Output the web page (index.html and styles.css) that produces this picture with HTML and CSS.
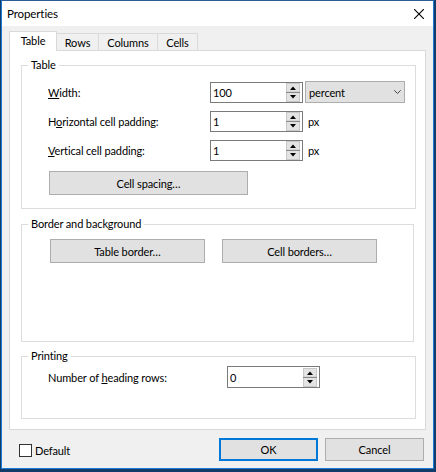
FILE: index.html
```html
<!DOCTYPE html>
<html lang="en">
<head>
<meta charset="utf-8">
<title>Properties</title>
<link rel="stylesheet" href="styles.css">
</head>
<body>
<div class="window">
  <div class="titlebar">
    <span class="title">Properties</span>
    <svg class="close" width="10" height="10" viewBox="0 0 10 10" aria-label="Close">
      <path d="M0 0 L10 10 M10 0 L0 10" stroke="#000" stroke-width="1.1" fill="none"/>
    </svg>
  </div>

  <div class="dialog">
    <div class="tabs">
      <div class="tab active">Table</div>
      <div class="tab tab-rows">Rows</div>
      <div class="tab tab-cols">Columns</div>
      <div class="tab tab-cells">Cells</div>
    </div>

    <div class="panel">
      <div class="group group-table">
        <span class="legend">Table</span>
        <div class="row">
          <label class="lbl"><u>W</u>idth:</label>
          <div class="spin">
            <span class="val">100</span>
            <svg class="spinner" width="14" height="19" viewBox="0 0 14 19">
              <rect x="0.5" y="0.5" width="13" height="8.5" fill="#e3e3e3" stroke="#c8c8c8"/>
              <rect x="0.5" y="9.5" width="13" height="9" fill="#e3e3e3" stroke="#c8c8c8"/>
              <line x1="0" y1="9.5" x2="14" y2="9.5" stroke="#8a8a8a"/>
              <path d="M4 7 L10 7 L7 3.5 Z" fill="#000"/>
              <path d="M4 12 L10 12 L7 15.5 Z" fill="#000"/>
            </svg>
          </div>
          <div class="combo">
            <span>percent</span>
            <svg width="7" height="4" viewBox="0 0 7 4"><path d="M0.3 0.3 L3.5 3.5 L6.7 0.3" stroke="#444" stroke-width="1" fill="none"/></svg>
          </div>
        </div>
        <div class="row">
          <label class="lbl">H<u>o</u>rizontal cell padding:</label>
          <div class="spin">
            <span class="val">1</span>
            <svg class="spinner" width="14" height="19" viewBox="0 0 14 19">
              <rect x="0.5" y="0.5" width="13" height="8.5" fill="#e3e3e3" stroke="#c8c8c8"/>
              <rect x="0.5" y="9.5" width="13" height="9" fill="#e3e3e3" stroke="#c8c8c8"/>
              <line x1="0" y1="9.5" x2="14" y2="9.5" stroke="#8a8a8a"/>
              <path d="M4 7 L10 7 L7 3.5 Z" fill="#000"/>
              <path d="M4 12 L10 12 L7 15.5 Z" fill="#000"/>
            </svg>
          </div>
          <span class="unit">px</span>
        </div>
        <div class="row">
          <label class="lbl"><u>V</u>ertical cell padding:</label>
          <div class="spin">
            <span class="val">1</span>
            <svg class="spinner" width="14" height="19" viewBox="0 0 14 19">
              <rect x="0.5" y="0.5" width="13" height="8.5" fill="#e3e3e3" stroke="#c8c8c8"/>
              <rect x="0.5" y="9.5" width="13" height="9" fill="#e3e3e3" stroke="#c8c8c8"/>
              <line x1="0" y1="9.5" x2="14" y2="9.5" stroke="#8a8a8a"/>
              <path d="M4 7 L10 7 L7 3.5 Z" fill="#000"/>
              <path d="M4 12 L10 12 L7 15.5 Z" fill="#000"/>
            </svg>
          </div>
          <span class="unit">px</span>
        </div>
        <button class="btn btn-spacing">Cell spacing…</button>
      </div>

      <div class="group group-border">
        <span class="legend">Border and background</span>
        <div class="btn-row">
          <button class="btn btn-wide">Table border…</button>
          <button class="btn btn-wide">Cell borders…</button>
        </div>
      </div>

      <div class="group group-print">
        <span class="legend">Printing</span>
        <div class="row row-print">
          <label class="lbl lbl-print">Number of <u>h</u>eading rows:</label>
          <div class="spin spin-tall">
            <span class="val">0</span>
            <svg class="spinner" width="14" height="19" viewBox="0 0 14 19">
              <rect x="0.5" y="0.5" width="13" height="8.5" fill="#e3e3e3" stroke="#c8c8c8"/>
              <rect x="0.5" y="9.5" width="13" height="9" fill="#e3e3e3" stroke="#c8c8c8"/>
              <line x1="0" y1="9.5" x2="14" y2="9.5" stroke="#8a8a8a"/>
              <path d="M4 7 L10 7 L7 3.5 Z" fill="#000"/>
              <path d="M4 12 L10 12 L7 15.5 Z" fill="#000"/>
            </svg>
          </div>
        </div>
      </div>
    </div>

    <div class="footer">
      <label class="check"><span class="box"></span>Default</label>
      <div class="actions">
        <button class="btn btn-ok">OK</button>
        <button class="btn btn-cancel">Cancel</button>
      </div>
    </div>
  </div>
</div>
</body>
</html>
```

FILE: styles.css
```css
* {
  box-sizing: border-box;
}

html,
body {
  margin: 0;
  padding: 0;
}

body {
  width: 436px;
  height: 472px;
  overflow: hidden;
  background: #123c69;
  font-family: Lato, "Noto Sans", sans-serif;
  font-size: 11px;
  letter-spacing: -0.12px;
  color: #000;
}

/* dialog frame */
.window {
  margin-left: 1px;
  width: 433px;
  height: 469px;
  border: 1px solid #1c7cd5;
  border-top-color: #2a5d92;
  background: #f0f0f0;
  display: flex;
  flex-direction: column;
}

.titlebar {
  height: 25px;
  flex: 0 0 25px;
  background: #fff;
  display: flex;
  align-items: center;
  justify-content: space-between;
  padding: 0 9px 0 5px;
  font-size: 11.5px;
  letter-spacing: -0.1px;
}

.close {
  display: block;
}

.dialog {
  padding: 5px 9px 0 7px;
  display: flex;
  flex-direction: column;
}

/* tab strip */
.tabs {
  display: flex;
  align-items: flex-end;
  height: 19px;
}

.tab {
  height: 17px;
  display: flex;
  align-items: center;
  justify-content: center;
  padding-top: 1px;
  border-top: 1px solid #d9d9d9;
  border-right: 1px solid #d9d9d9;
  background: #f0f0f0;
}

.tab.active {
  position: relative;
  z-index: 1;
  width: 48px;
  height: 20px;
  margin-bottom: -1px;
  padding-top: 0;
  padding-bottom: 2px;
  border-left: 1px solid #d9d9d9;
  background: #fff;
}

.tab-rows {
  width: 42px;
}

.tab-cols {
  width: 59px;
}

.tab-cells {
  width: 40px;
}

.panel {
  width: 417px;
  height: 380px;
  border: 1px solid #d9d9d9;
  background: #fff;
  padding: 14px 0 0 11px;
  display: flex;
  flex-direction: column;
}

/* group boxes */
.group {
  position: relative;
  border: 1px solid #dcdcdc;
  display: flex;
  flex-direction: column;
  align-items: flex-start;
}

.legend {
  position: absolute;
  top: -9px;
  left: 6px;
  padding: 0 3px;
  line-height: 16px;
  background: #fff;
}

.group-table {
  width: 395px;
  height: 144px;
  padding: 16px 0 0 26px;
}

.group-border {
  width: 393px;
  height: 118px;
  margin-top: 15px;
  padding: 14px 0 0 28px;
}

.group-print {
  width: 395px;
  height: 63px;
  margin-top: 14px;
  padding: 9px 0 0 26px;
}

.row {
  display: flex;
  align-items: center;
  height: 21px;
  margin-bottom: 8px;
}

.row:last-of-type {
  margin-bottom: 0;
}

.row-print {
  height: 22px;
}

.lbl {
  flex: 0 0 162px;
}

.lbl-print {
  flex-basis: 179px;
}

.spin {
  width: 93px;
  height: 21px;
  border: 1px solid #7a7a7a;
  background: #fff;
  display: flex;
  align-items: center;
  justify-content: space-between;
  padding: 0 2px 0 2px;
}

.spin-tall {
  height: 22px;
}

.spinner {
  display: block;
}

.combo {
  width: 100px;
  height: 22px;
  margin-left: 2px;
  margin-top: -1px;
  align-self: flex-start;
  border: 1px solid #adadad;
  background: #e1e1e1;
  display: flex;
  align-items: center;
  justify-content: space-between;
  padding: 0 3px 0 3px;
}

.combo svg {
  display: block;
}

.unit {
  margin-left: 5px;
}

/* push buttons */
.btn {
  font: inherit;
  letter-spacing: inherit;
  color: #000;
  background: #e1e1e1;
  border: 1px solid #adadad;
  padding: 0;
  margin: 0;
}

.btn-spacing {
  width: 199px;
  height: 24px;
  margin: 10px 0 0 1px;
}

.btn-row {
  display: flex;
  gap: 17px;
}

.btn-wide {
  width: 155px;
  height: 24px;
}

.footer {
  display: flex;
  align-items: center;
  margin-top: 8px;
  padding-left: 10px;
}

.check {
  display: flex;
  align-items: center;
  gap: 3px;
  margin-top: 2px;
}

.box {
  width: 13px;
  height: 13px;
  border: 1px solid #333;
  background: #fff;
}

.actions {
  margin-left: auto;
  display: flex;
  gap: 7px;
}

.btn-ok,
.btn-cancel {
  width: 99px;
  height: 23px;
}

.btn-ok {
  border: 2px solid #0078d7;
}
```
